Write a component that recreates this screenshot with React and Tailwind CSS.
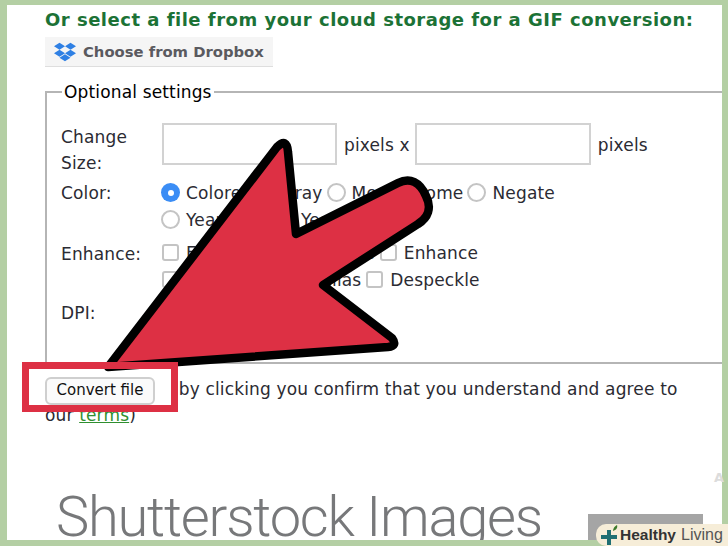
import { FaDropbox } from "react-icons/fa";

function Radio({ label, checked }) {
  return (
    <span className="inline-flex items-center gap-[6px] h-[27px]">
      {checked ? (
        <span className="w-[19px] h-[19px] rounded-full bg-[#3b8df5] flex items-center justify-center">
          <span className="w-[6px] h-[6px] rounded-full bg-white" />
        </span>
      ) : (
        <span className="w-[19px] h-[19px] rounded-full bg-white border-2 border-[#c4c4c4]" />
      )}
      {label}
    </span>
  );
}

function Check({ label }) {
  return (
    <span className="inline-flex items-center gap-[7px] h-[27px]">
      <span className="w-[17px] h-[17px] rounded-[3px] bg-white border-2 border-[#c4c4c4]" />
      {label}
    </span>
  );
}

function Arrow() {
  return (
    <svg className="absolute left-0 top-0" width="728" height="546" viewBox="0 0 728 546">
      <path
        d="M108 367 L277 147 Q287 137 288 152 L296 234 L398 183 C410 177 420 182 426 196 C432 208 428 218 418 224 L323 285 L392 338 Q398 346 388 347 Z"
        fill="#dd3044"
        stroke="#000"
        strokeWidth="8.5"
        strokeLinejoin="round"
      />
    </svg>
  );
}

export default function App() {
  return (
    <div className="relative w-[728px] h-[546px] overflow-hidden bg-[#b4cfa4] pt-[5px] pb-[6px] pl-[7px] pr-[6px] font-['DejaVu_Sans',sans-serif]">
      <div className="h-full overflow-hidden bg-white pl-[38px] text-[#2b2b33] text-[17px] tracking-[0.15px] leading-[26px]">
        {/* Cloud storage */}
        <h2 className="pt-[3px] text-[18px] tracking-[0.5px] leading-[24px] font-bold text-[#1c7236] whitespace-nowrap">
          Or select a file from your cloud storage for a GIF conversion:
        </h2>
        <button className="mt-[5px] w-[228px] h-[30px] flex items-center gap-[7px] pl-[9px] bg-[#f5f5f5] border-b border-[#dedede] text-[#5a5a5f] text-[14.8px] tracking-normal font-bold whitespace-nowrap">
          <FaDropbox className="text-[#2f80e4] text-[22px]" />
          Choose from Dropbox
        </button>

        {/* Settings */}
        <fieldset className="mt-[15px] h-[282px] border-2 border-r-0 border-[#b5b5b5] pl-[14px]">
          <legend className="ml-[1px] px-[2px] -mb-px text-black text-[17px] leading-[20px]">Optional settings</legend>
          <div className="flex mt-[23px]">
            <div className="w-[101px]">Change Size:</div>
            <div className="flex items-center h-[42px] -mt-[1px] gap-[7px]">
              <span className="w-[175px] h-[42px] border-2 border-[#d2d2d2]" />
              <span className="mt-[2px]">pixels x</span>
              <span className="w-[176px] h-[42px] -ml-[2px] border-2 border-[#d2d2d2]" />
              <span className="mt-[2px]">pixels</span>
            </div>
          </div>
          <div className="flex mt-[4px]">
            <div className="w-[100px] leading-[27px]">Color:</div>
            <div className="w-[420px] -mt-[1px] flex flex-wrap gap-x-[4px]">
              <Radio label="Colored" checked />
              <Radio label="Gray" />
              <Radio label="Monochrome" />
              <Radio label="Negate" />
              <Radio label="Year 1980" />
              <Radio label="Year 1900" />
            </div>
          </div>
          <div className="flex mt-[8px]">
            <div className="w-[101px] leading-[27px]">Enhance:</div>
            <div className="w-[340px] -mt-[2px] flex flex-wrap gap-x-[5px]">
              <Check label="Equalize" />
              <Check label="Normalize" />
              <Check label="Enhance" />
              <Check label="Sharpen" />
              <Check label="Antialias" />
              <Check label="Despeckle" />
            </div>
          </div>
          <div className="mt-[7px]">DPI:</div>
        </fieldset>

        {/* Convert */}
        <div className="flex items-center mt-[13px] h-[28px]">
          <button className="w-[110px] h-[28px] pb-[3px] rounded-[6px] border-2 border-[#cfcfcf] bg-[#fbfbfb] text-[#111] text-[15px] leading-[18px] tracking-normal">
            Convert file
          </button>
          <span className="ml-[17px] -mt-[4px] whitespace-nowrap">(by clicking you confirm that you understand and agree to</span>
        </div>
        <p className="leading-[24px] -mt-[2px]">
          our <span className="text-[#2f8f2f] underline">terms</span>)
        </p>
        <div className="mt-[58px] ml-[11px] font-['Roboto',sans-serif] font-light text-[#77787a] text-[56px] tracking-[-1.2px] leading-[64px] whitespace-nowrap">
          Shutterstock Images
        </div>
      </div>

      {/* Annotation */}
      <Arrow />
      <div className="absolute left-[22px] top-[362px] w-[156px] h-[50px] border-[7px] border-[#dd3044]" />

      {/* Watermark */}
      <div className="absolute left-[588px] top-[514px] w-[115px] h-[26px] bg-[#a5a5a5]" />
      <div className="absolute left-[596px] top-[524px] w-[132px] h-[22px] rounded-tl-[10px] rounded-bl-[10px] bg-[#f6edd8] flex items-center pl-[4px] text-[15.5px] font-['Liberation_Sans',sans-serif] text-[#333]">
        <svg className="shrink-0" width="20" height="22" viewBox="0 0 20 22">
          <path d="M7 6h4v5h6v4h-6v6H7v-6H1v-4h6z" fill="#1f6f73" />
          <path d="M13 7c0-3 2-5 4-6 1 3-1 5-4 6z" fill="#3d7a2c" />
        </svg>
        <span className="font-bold">Healthy</span>
        <span className="ml-[5px] text-[16px] text-[#555]">Living</span>
      </div>
      <span className="absolute left-[714px] top-[468px] text-[#dcdcdc] font-bold text-[13px]">A</span>
    </div>
  );
}
